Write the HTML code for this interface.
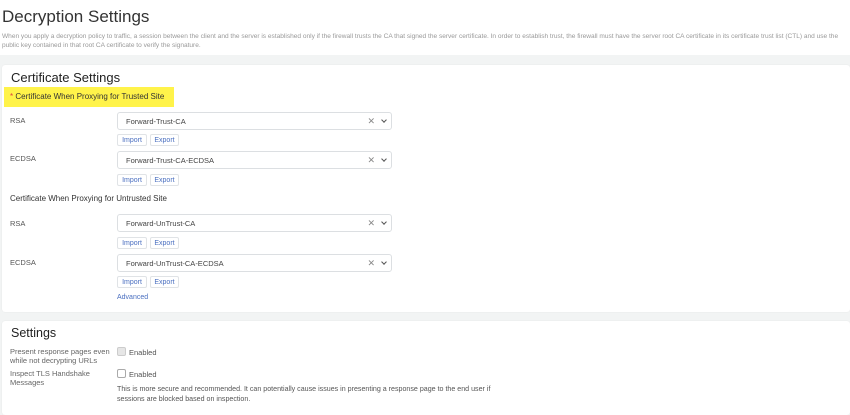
<!DOCTYPE html>
<html><head><meta charset="utf-8"><style>
*{box-sizing:border-box;margin:0;padding:0}
body{width:850px;height:415px;overflow:hidden;background:#fff;font-family:"Liberation Sans",sans-serif;position:relative;color:#333}
.a{position:absolute;white-space:nowrap}
.grey{position:absolute;left:0;top:55px;width:850px;height:360px;background:#f2f4f4}
.card{position:absolute;left:2px;width:848px;background:#fff;border-radius:3px;box-shadow:0 0 1px #ddd}
.lbl{font-size:7.5px;color:#555}
.sel{position:absolute;left:117px;width:275px;height:18px;border:1px solid #dcdfe2;border-radius:3px;background:#fff;font-size:7.5px;color:#444;padding:4px 0 0 8px}
.sel .x{position:absolute;right:16px;top:3px;font-size:9px;color:#888}
.sel .c{position:absolute;right:5px;top:5px;width:4px;height:4px;border-right:1.3px solid #555;border-bottom:1.3px solid #555;transform:rotate(45deg)}
.btn{position:absolute;height:12px;border:1px solid #e0e3e6;border-radius:2px;font-size:7px;color:#4a6fc0;padding:2px 0 0;text-align:center;background:#fff}
.cb{position:absolute;left:117px;width:9px;height:9px;border:1px solid #aaa;border-radius:2px}
</style></head><body>
<div class="a" style="left:2px;top:7px;font-size:17px;color:#333">Decryption Settings</div>
<div class="a" style="left:2px;top:32px;font-size:6.55px;color:#999;line-height:9px">When you apply a decryption policy to traffic, a session between the client and the server is established only if the firewall trusts the CA that signed the server certificate. In order to establish trust, the firewall must have the server root CA certificate in its certificate trust list (CTL) and use the<br>public key contained in that root CA certificate to verify the signature.</div>
<div class="grey"></div>
<div class="card" style="top:65px;height:247px"></div>
<div class="card" style="top:321px;height:94px"></div>
<div class="a" style="left:11px;top:70px;font-size:13px;color:#222">Certificate Settings</div>
<div class="a" style="left:4px;top:87px;width:170px;height:20px;background:#fff34a"></div>
<div class="a" style="left:10px;top:92px;font-size:8px;color:#333"><span style="color:#e04040">*</span> Certificate When Proxying for Trusted Site</div>

<div class="a lbl" style="left:10px;top:116px">RSA</div>
<div class="sel" style="top:112px">Forward-Trust-CA<span class="x">✕</span><span class="c"></span></div>
<div class="btn" style="left:117px;top:134px;width:30px">Import</div>
<div class="btn" style="left:150px;top:134px;width:29px">Export</div>

<div class="a lbl" style="left:10px;top:154px">ECDSA</div>
<div class="sel" style="top:151px">Forward-Trust-CA-ECDSA<span class="x">✕</span><span class="c"></span></div>
<div class="btn" style="left:117px;top:174px;width:30px">Import</div>
<div class="btn" style="left:150px;top:174px;width:29px">Export</div>

<div class="a" style="left:10px;top:194px;font-size:8px;color:#333">Certificate When Proxying for Untrusted Site</div>

<div class="a lbl" style="left:10px;top:219px">RSA</div>
<div class="sel" style="top:214px">Forward-UnTrust-CA<span class="x">✕</span><span class="c"></span></div>
<div class="btn" style="left:117px;top:237px;width:30px">Import</div>
<div class="btn" style="left:150px;top:237px;width:29px">Export</div>

<div class="a lbl" style="left:10px;top:258px">ECDSA</div>
<div class="sel" style="top:254px">Forward-UnTrust-CA-ECDSA<span class="x">✕</span><span class="c"></span></div>
<div class="btn" style="left:117px;top:276px;width:30px">Import</div>
<div class="btn" style="left:150px;top:276px;width:29px">Export</div>
<div class="a" style="left:117px;top:294px;font-size:7px;color:#4a6fc0">Advanced</div>

<div class="a" style="left:11px;top:326px;font-size:12.5px;color:#222">Settings</div>
<div class="a lbl" style="left:10px;top:347px;line-height:9px;color:#666">Present response pages even<br>while not decrypting URLs</div>
<div class="cb" style="top:347px;background:#e6e6e6;border-color:#ccc"></div>
<div class="a lbl" style="left:129px;top:348px">Enabled</div>
<div class="a lbl" style="left:10px;top:369px;line-height:9px;color:#666">Inspect TLS Handshake<br>Messages</div>
<div class="cb" style="top:369px"></div>
<div class="a lbl" style="left:129px;top:370px">Enabled</div>
<div class="a" style="left:117px;top:385px;font-size:7.1px;color:#555;line-height:9.5px">This is more secure and recommended. It can potentially cause issues in presenting a response page to the end user if<br>sessions are blocked based on inspection.</div>
</body></html>
